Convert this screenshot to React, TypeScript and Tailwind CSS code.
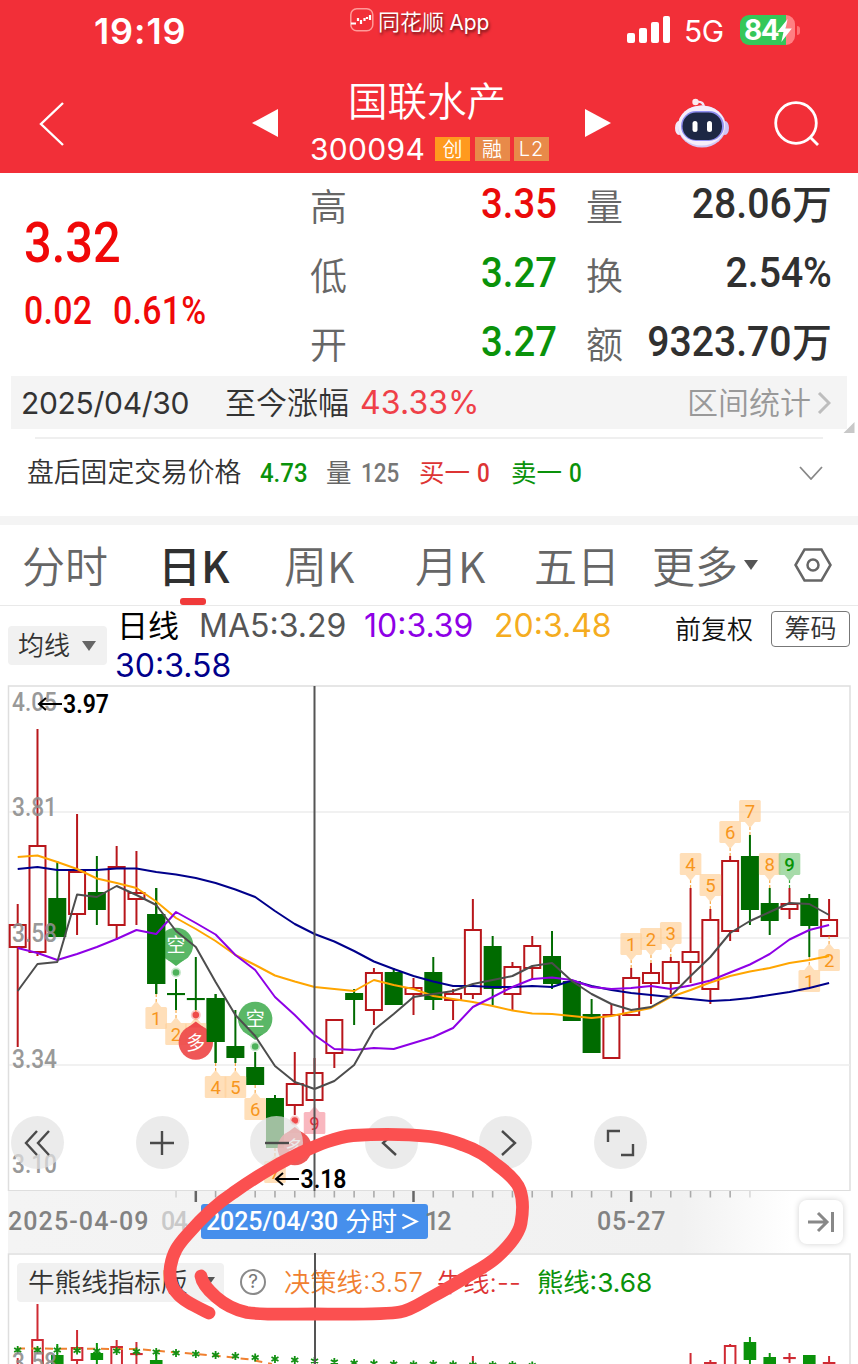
import type { ReactNode } from "react";

const STEP = 19.79;
const px = (i: number) => 17.7 + i * STEP;

const RED = "#b8161b";
const GREEN = "#006b00";

// [up, bodyTop, bodyBottom, high, low]
type Candle = [boolean, number, number, number, number];

const candles: Candle[] = [
  [true, 925, 947, 904, 1047],
  [true, 846, 952, 729, 956],
  [false, 898, 937, 861, 937],
  [true, 872, 914, 814, 935],
  [false, 892, 910, 856, 925],
  [true, 867, 925, 846, 940],
  [true, 893, 899, 851, 925],
  [false, 914, 984, 888, 994],
  [false, 993, 995, 979, 1010],
  [false, 998, 1000, 957, 1010],
  [false, 998, 1042, 994, 1063],
  [false, 1046, 1058, 1010, 1063],
  [false, 1067, 1085, 1052, 1085],
  [false, 1098, 1148, 1095, 1148],
  [true, 1084, 1105, 1052, 1115],
  [true, 1073, 1100, 1058, 1100],
  [true, 1020, 1053, 1020, 1068],
  [false, 993, 1000, 989, 1025],
  [true, 973, 1010, 968, 1025],
  [false, 972, 1005, 968, 1005],
  [true, 988, 994, 978, 1015],
  [false, 972, 1000, 957, 1010],
  [true, 994, 1000, 989, 1020],
  [true, 930, 994, 899, 999],
  [false, 946, 989, 936, 1005],
  [true, 967, 994, 962, 1010],
  [true, 946, 968, 936, 979],
  [false, 956, 984, 931, 989],
  [false, 981, 1021, 981, 1021],
  [false, 1014, 1053, 999, 1053],
  [true, 1015, 1058, 1004, 1058],
  [true, 978, 1015, 968, 1015],
  [true, 973, 983, 963, 1004],
  [true, 962, 983, 957, 994],
  [true, 952, 962, 888, 983],
  [true, 920, 989, 909, 1004],
  [true, 861, 931, 856, 941],
  [false, 856, 910, 835, 925],
  [false, 903, 921, 888, 935],
  [true, 904, 909, 888, 919],
  [false, 898, 926, 894, 957],
  [true, 920, 936, 899, 936],
];

const lines = [
  {
    color: "#00008b",
    ys: [869, 867, 870, 870, 870, 868.5, 868.5, 872, 874.5, 878, 883, 889.5, 897, 911, 924, 934, 941.5, 951, 961.5, 969, 976, 981.5, 986, 986, 987, 987, 986, 987, 980.5, 986, 990, 993, 995, 997, 999, 1001, 1000, 998, 995, 992, 988, 983],
  },
  {
    color: "#ffa500",
    ys: [857, 855.5, 862, 869, 878.5, 883, 888, 901.5, 918, 929, 941, 955, 965, 975.5, 981.5, 987, 989, 991, 980, 985, 989, 996, 999, 1002, 1006, 1010.5, 1013.5, 1014, 1016, 1018, 1016, 1012, 1008, 997, 990, 982.5, 976, 971.5, 968, 963, 960, 956],
  },
  {
    color: "#8e00e6",
    ys: [948, 953, 960, 954, 947, 939, 930, 934, 912, 923, 934.5, 955, 970, 997, 1015, 1035, 1049, 1050, 1048, 1049, 1043, 1037, 1028, 1007, 997, 987, 979, 977.5, 980, 987, 989, 988, 986, 989, 985.5, 980.5, 972.5, 964.5, 954, 939.5, 930, 925],
  },
  {
    color: "#4d4d4d",
    ys: [991, 964, 962, 894.5, 897, 886, 895, 905, 931, 947, 982, 1015, 1036, 1066, 1082, 1089, 1081, 1065, 1030, 1014, 997, 994, 991, 984, 980, 976, 966, 963, 981, 994, 1004, 1010, 1007, 996, 976, 957, 933, 921, 912, 903, 904, 915],
  },
];

// nine-turn counters: [candle index, label, tip y, above the candle]
const counters: [number, string, number, boolean][] = [
  [7, "1", 994, false],
  [8, "2", 1010, false],
  [9, "", 1010, false],
  [10, "4", 1063, false],
  [11, "5", 1063, false],
  [12, "6", 1085, false],
  [13, "7", 1148, false],
  [15, "9", 1099, false],
  [31, "1", 968, true],
  [32, "2", 963, true],
  [33, "3", 957, true],
  [34, "4", 888, true],
  [35, "5", 909, true],
  [36, "6", 856, true],
  [37, "7", 835, true],
  [38, "8", 888, true],
  [39, "9", 888, true],
  [40, "1", 957, false],
  [41, "2", 936, false],
];

const toPoints = (ys: number[]) => ys.map((y, i) => `${px(i)},${y}`).join(" ");

const CandleShape = ({ index, data }: { index: number; data: Candle }) => {
  const [up, top, bottom, high, low] = data;
  const x = px(index);
  const color = up ? RED : GREEN;
  return (
    <g stroke={color} strokeWidth="2">
      {high < top && <line x1={x} x2={x} y1={high} y2={top} />}
      {low > bottom && <line x1={x} x2={x} y1={bottom} y2={low} />}
      <rect
        x={x - 8}
        y={up ? top : top + 1}
        width="16"
        height={Math.max(up ? bottom - top : bottom - top - 2, 0.1)}
        fill={up ? "white" : GREEN}
      />
    </g>
  );
};

const Counter = ({ item }: { item: [number, string, number, boolean] }) => {
  const [index, label, tip, above] = item;
  const x = px(index);
  const top = above ? tip - 35 : tip + 13;
  const green = index === 39;
  const pink = index === 15;
  const bg = green ? "#82cd86" : pink ? "#f79aa4" : "#ffd29c";
  const fg = green ? "#089408" : pink ? "#d9303c" : "#f7961d";
  const edge = above ? top + 22 : top;
  const dir = above ? 1 : -1;
  return (
    <g>
      <line x1={x} x2={x} y1={tip} y2={edge + dir * 5} stroke={fg} strokeWidth="1.2" strokeDasharray="3 2" opacity="0.8" />
      <g fill={bg} opacity="0.7">
        <rect x={x - 10.8} y={top} width="21.6" height="22" rx="1.5" />
        <path d={`M${x - 5} ${edge}L${x} ${edge + dir * 6}L${x + 5} ${edge}Z`} />
      </g>
      <text x={x} y={top + 17.5} textAnchor="middle" fontSize="18.5" fontWeight={green ? 500 : 400} fill={fg}>
        {label}
      </text>
    </g>
  );
};

interface SignalProps {
  index: number;
  y: number;
  dotY: number;
  label: string;
  color: string;
}

const Signal = ({ index, y, dotY, label, color }: SignalProps) => {
  const x = px(index);
  const dir = dotY > y ? 1 : -1;
  return (
    <g>
      <circle cx={x} cy={dotY} r="5" fill={color} opacity="0.3" />
      <circle cx={x} cy={dotY} r="3.3" fill={color} />
      <circle cx={x} cy={y} r="17.2" fill={color} opacity="0.93" />
      <path d={`M${x - 8} ${y + dir * 15}L${x} ${y + dir * 21}L${x + 8} ${y + dir * 15}Z`} fill={color} />
      <text
        x={x}
        y={y + 7}
        textAnchor="middle"
        fontSize="19"
        fill="white"
        className="font-['Noto_Sans_CJK_SC',sans-serif]"
      >
        {label}
      </text>
    </g>
  );
};

const PriceChart = () => (
  <svg viewBox="0 685 858 506" className="block h-[506px] w-[858px] font-['Roboto','Noto_Sans_CJK_SC',sans-serif]">
    <path d="M8.5 1191V686H850V1191" fill="none" stroke="#dedede" strokeWidth="1.5" />
    {[812, 938, 1065].map((y) => (
      <line key={y} x1="9" x2="850" y1={y} y2={y} stroke="#ececec" strokeWidth="1.5" />
    ))}
    <line x1="8" x2="850" y1="1190.5" y2="1190.5" stroke="#dedede" />
    {candles.map((c, i) => (
      <CandleShape key={i} index={i} data={c} />
    ))}
    {counters.map((c) => (
      <Counter key={c[0]} item={c} />
    ))}
    <Signal index={8} y={945} dotY={972.5} label="空" color="#4db25a" />
    <Signal index={12} y={1019} dotY={1046.5} label="空" color="#4db25a" />
    <Signal index={9} y={1042.5} dotY={1015} label="多" color="#ee4a4a" />
    <Signal index={14} y={1148} dotY={1120.5} label="多" color="#ee4a4a" />
    {/* these two bodies sit in front of their neighbours' markers */}
    <CandleShape index={7} data={candles[7]} />
    <CandleShape index={10} data={candles[10]} />
    {lines.map((l) => (
      <polyline key={l.color} points={toPoints(l.ys)} fill="none" stroke={l.color} strokeWidth="2" strokeLinejoin="round" />
    ))}
    <g fontSize="25" fontWeight="500" fill="#8e8e8e" opacity="0.9">
      <text x="12" y="711" textLength="45" lengthAdjust="spacingAndGlyphs">4.05</text>
      <text x="12" y="815.5" textLength="45" lengthAdjust="spacingAndGlyphs">3.81</text>
      <text x="12" y="942" textLength="45" lengthAdjust="spacingAndGlyphs">3.58</text>
      <text x="12" y="1068" textLength="45" lengthAdjust="spacingAndGlyphs">3.34</text>
      <text x="12" y="1173" textLength="45" lengthAdjust="spacingAndGlyphs">3.10</text>
    </g>
    <line x1="314.5" x2="314.5" y1="686" y2="1191" stroke="#555" strokeWidth="2" />
    <g stroke="black" strokeWidth="2" fill="none">
      <path d="M62 704H39M46 698L39 704L46 710" />
      <path d="M299 1179H276M283 1173L276 1179L283 1185" />
    </g>
    <g fontSize="25" fontWeight="600" fill="black">
      <text x="63" y="713" textLength="46" lengthAdjust="spacingAndGlyphs">3.97</text>
      <text x="300.5" y="1188" textLength="46" lengthAdjust="spacingAndGlyphs">3.18</text>
    </g>
  </svg>
);

const RoundButton = ({ children }: { children: ReactNode }) => (
  <button className="flex h-[53px] w-[53px] items-center justify-center rounded-full bg-[#e3e3e3]/70 first:mr-[10px]">
    <svg viewBox="0 0 52 52" className="h-[52px] w-[52px]" fill="none" stroke="#4a4a4a" strokeWidth="2.4">
      {children}
    </svg>
  </button>
);

const ChartControls = () => (
  <div className="absolute top-[431px] left-[11px] flex gap-[61.6px]">
    <RoundButton>
      <path d="M25 14L14 26L25 38M37 14L26 26L37 38" />
    </RoundButton>
    <RoundButton>
      <path d="M14 26H38M26 14V38" />
    </RoundButton>
    <RoundButton>
      <path d="M14 26H38" />
    </RoundButton>
    <RoundButton>
      <path d="M31 14L18 26L31 38" />
    </RoundButton>
    <RoundButton>
      <path d="M22 14L35 26L22 38" />
    </RoundButton>
    <RoundButton>
      <path d="M14 25V14H26M39 27V38H27" />
    </RoundButton>
  </div>
);

const StatusBar = () => (
  <div className="flex h-[60px] items-start text-white">
    <span className="mt-[11px] ml-[94px] w-[256px] font-['Inter'] text-[36px]/[40px] font-semibold tracking-[0.9px]">19:19</span>
    <svg viewBox="0 0 24 24" className="mt-[8px] h-[24px] w-[24px] shrink-0" fill="none">
      <rect x="0.8" y="0.8" width="22" height="22" rx="6" stroke="#ff9a98" strokeWidth="1.5" />
      <path d="M1 15.500h5M8 10v3M11 12v4M14.500 10v3M17 9v2M20 7v5" stroke="white" strokeWidth="2.2" />
    </svg>
    <span className="mt-[7px] ml-1 w-[249px] font-['Inter','Noto_Sans_CJK_SC',sans-serif] text-[22px]/[30px] font-[350] whitespace-nowrap [text-shadow:1px_2px_3px_rgba(0,0,0,0.6)]">
      同花顺 <span className="-ml-[1px] text-[21px] font-normal">App</span>
    </span>
    <div className="mt-[16px] flex h-[27px] w-[43px] shrink-0 items-end justify-between">
      <i className="h-[10px] w-[8px] rounded-[2px] bg-white" />
      <i className="h-[15px] w-[8px] rounded-[2px] bg-white" />
      <i className="h-[21px] w-[8px] rounded-[2px] bg-white" />
      <i className="h-[27px] w-[7px] rounded-[2px] bg-white" />
    </div>
    <span className="mt-[12px] ml-[14px] w-[56px] font-['Inter'] text-[30px]/[38px] tracking-[-0.5px]">5G</span>
    <div className="mt-[15px] flex h-[30px] w-[55px] shrink-0 items-center rounded-[9px] bg-[linear-gradient(90deg,#34c759_83%,#ff7f82_83%)] pl-[4px]">
      <span className="w-[33px] font-['Inter'] text-[28px]/[30px] font-bold tracking-[-1.5px]">84</span>
      <svg viewBox="0 0 14 22" className="h-[23px] w-[15px] shrink-0" fill="white">
        <path d="M10 0L0 12.500H6L4 22L14 9H8Z" />
      </svg>
    </div>
    <i className="mt-[26px] ml-[2px] h-[9px] w-[3px] rounded-r-full bg-[#ff6f72]" />
  </div>
);

const Robot = () => (
  <svg viewBox="0 0 54 50" className="h-[50px] w-[54px] shrink-0">
    <path d="M21 4C26 3 29 5 29 10" fill="none" stroke="#f3e6f7" strokeWidth="2.2" />
    <circle cx="20.500" cy="4" r="3.200" fill="#fbe9ef" />
    <ellipse cx="4" cy="30" rx="4" ry="7" fill="#f3e8f8" />
    <ellipse cx="50" cy="30" rx="4" ry="7" fill="#cfc4f5" />
    <ellipse cx="27" cy="28.500" rx="24" ry="21" fill="#d3c8f6" />
    <ellipse cx="26.500" cy="27.500" rx="23.500" ry="20" fill="#f5eefb" />
    <rect x="6" y="13" width="43" height="30" rx="15" fill="#8f8ff0" />
    <rect x="7.500" y="14.500" width="39.500" height="27.500" rx="13.500" fill="#1d2744" />
    <rect x="17.500" y="23" width="5" height="11" rx="2.500" fill="white" />
    <rect x="32" y="23" width="5" height="11" rx="2.500" fill="white" />
  </svg>
);

const tagClass = "flex h-[24px] w-[35px] items-center justify-center text-[20px]/[24px] font-[350]";

const Header = () => (
  <header className="h-[173px] bg-[#f22f38] text-white">
    <StatusBar />
    <div className="flex h-[113px] items-start">
      <svg viewBox="0 0 26 46" className="mt-[41px] ml-[39px] h-[46px] w-[26px]" fill="none" stroke="white" strokeWidth="2.4">
        <path d="M24 2L2 23L24 44" />
      </svg>
      <svg viewBox="0 0 26 28" className="mt-[49px] ml-[187px] h-[28px] w-[26px]" fill="white">
        <path d="M0 14L26 0V28Z" />
      </svg>
      <div className="ml-[32px] flex w-[241px] flex-col">
        <h1 className="mt-[11px] mb-[2px] pl-[38px] text-[39.5px]/[56px] font-[350] whitespace-nowrap">国联水产</h1>
        <div className="flex h-[40px] items-center gap-[4.5px]">
          <span className="w-[120.500px] font-['Inter'] text-[30px]/[36px] tracking-[0.3px]">300094</span>
          <span className={`${tagClass} bg-[#ff9a1e]`}>创</span>
          <span className={`${tagClass} bg-[#e88a49]`}>融</span>
          <span className={`${tagClass} bg-[#e88a49] font-['Inter'] tracking-[1px]`}>L2</span>
        </div>
      </div>
      <svg viewBox="0 0 26 28" className="mt-[49px] ml-[34px] h-[28px] w-[26px]" fill="white">
        <path d="M26 14L0 0V28Z" />
      </svg>
      <div className="mt-[38px] ml-[64px] flex">
        <Robot />
      </div>
      <svg viewBox="0 0 46 46" className="mt-[41px] ml-[45px] h-[46px] w-[46px]" fill="none" stroke="white" strokeWidth="2.8">
        <circle cx="22" cy="22" r="20.3" />
        <path d="M36 36L44 44" />
      </svg>
    </div>
  </header>
);

const stats = [
  { label: "高", value: "3.35", color: "text-[#eb0a0a]", label2: "量", value2: "28.06", unit: "万" },
  { label: "低", value: "3.27", color: "text-[#0a920a]", label2: "换", value2: "2.54%", unit: "" },
  { label: "开", value: "3.27", color: "text-[#0a920a]", label2: "额", value2: "9323.70", unit: "万" },
];

const labelClass = "w-[37px] text-[37px]/[60px] font-[350] text-[#666]";

const Quote = () => (
  <section className="flex h-[203px] font-medium">
    <div className="w-[310px] pl-[24px] font-['Roboto'] text-[#f00808]">
      <div className="mt-[37px] w-fit origin-left scale-x-[0.87] text-[56px]/[66px]">3.32</div>
      <div className="mt-[13px] flex text-[38px]/[44px] tracking-[0.3px]">
        <span className="w-[89px] origin-left scale-x-[0.89]">0.02</span>
        <span className="origin-left scale-x-[0.89]">0.61%</span>
      </div>
    </div>
    <div className="-mt-[3px] flex flex-1 flex-col">
      {stats.map((row) => (
        <div key={row.label} className="flex h-[69px] shrink-0 items-center">
          <span className={labelClass}>{row.label}</span>
          <span className={`w-[210px] origin-right scale-x-[0.89] pb-[4px] text-right font-['Roboto'] text-[43px]/[60px] ${row.color}`}>{row.value}</span>
          <span className={`ml-[29px] ${labelClass}`}>{row.label2}</span>
          <span className="flex w-[209px] justify-end pb-[4px] text-[43px]/[60px] text-[#303030]">
            <span className="origin-right scale-x-[0.91] font-['Roboto']">{row.value2}</span>
            <span className="text-[40px]/[58px]">{row.unit}</span>
          </span>
        </div>
      ))}
    </div>
  </section>
);

const RangeBar = () => (
  <div className="flex h-[62px] items-start">
    <div className="ml-[11px] flex h-[53px] w-[836px] items-center bg-[#f4f4f4] pl-[10px] font-['Inter','Noto_Sans_CJK_SC',sans-serif] text-[30px]/[40px] whitespace-nowrap text-[#333]">
      <span className="w-[204px] tracking-[-0.3px]">2025/04/30</span>
      <span className="w-[135px] text-[31px] font-[350]">至今涨幅</span>
      <span className="w-[327px] text-[32px] tracking-[0.1px] text-[#ef4048]">43.33%</span>
      <span className="w-[130px] text-[31px] font-[350] text-[#999]">区间统计</span>
      <svg viewBox="0 0 14 22" className="h-[22px] w-[14px]" fill="none" stroke="#bdbdbd" strokeWidth="3">
        <path d="M2 1L12 11L2 21" />
      </svg>
    </div>
    <svg viewBox="0 0 12 12" className="mt-[46px] -ml-[4px] h-[11px] w-[12px]" fill="#c8c8c8">
      <path d="M12 0V12H0Z" />
    </svg>
  </div>
);

const AfterHours = () => (
  <div className="h-[79px]">
    <div className="mx-[35px] -mt-[1px] h-[2px] bg-[#efefef]" />
    <div className="flex h-[68px] items-center pl-[27px] font-['Roboto','Noto_Sans_CJK_SC',sans-serif] text-[25.5px]/[36px] font-medium whitespace-nowrap">
      <span className="w-[233px] text-[26.8px] font-[350] text-[#333]">盘后固定交易价格</span>
      <span className="w-[66px] origin-left scale-x-[0.94]  text-[#0a920a]">4.73</span>
      <span className="w-[35px] font-normal text-[#666]">量</span>
      <span className="w-[58px] origin-left scale-x-[0.88] text-[#777]">125</span>
      <span className="w-[58px] font-normal text-[#dd3434]">买一</span>
      <span className="w-[34px] origin-left scale-x-[0.88] text-[#dd3434]">0</span>
      <span className="w-[58px] font-normal text-[#0a920a]">卖一</span>
      <span className="w-[230px] origin-left scale-x-[0.88] text-[#0a920a]">0</span>
      <svg viewBox="0 0 24 14" className="h-[14px] w-[24px]" fill="none" stroke="#888" strokeWidth="1.8">
        <path d="M1 1L12 13L23 1" />
      </svg>
    </div>
  </div>
);

const tabs = [
  { name: "分时", width: "w-[136px]" },
  { name: "日K", width: "w-[126px]" },
  { name: "周K", width: "w-[131px]" },
  { name: "月K", width: "w-[119px]" },
  { name: "五日", width: "w-[118px]" },
  { name: "更多", width: "w-[92px]" },
];

const Tabs = () => (
  <nav className="flex h-[90px] items-start border-t-[9px] border-b-[1.5px] border-t-[#f4f4f4] border-b-[#e9e9e9] pl-[22px] text-[43px]/[60px] whitespace-nowrap text-[#666]">
    {tabs.map((t) => (
      <div key={t.name} className={`${t.width} shrink-0 pt-[9px] ${t.name === "日K" ? "font-medium text-[#303030]" : "font-[350]"}`}>
        {t.name}
        {t.name === "日K" && <div className="mt-[4px] ml-[22px] h-[7px] w-[26px] rounded-[3px] bg-[#f03a3a]" />}
      </div>
    ))}
    <svg viewBox="0 0 14 10" className="mt-[35px] h-[10px] w-[14px]" fill="#555">
      <path d="M0 0H14L7 10Z" />
    </svg>
    <svg viewBox="0 0 38 34" className="mt-[23px] ml-[36px] h-[34px] w-[38px]" fill="none" stroke="#666" strokeWidth="2.5">
      <path d="M10.500 1.500H27.500L36.500 17L27.500 32.500H10.500L1.500 17Z" />
      <circle cx="19" cy="17" r="5.5" />
    </svg>
  </nav>
);

const Averages = () => (
  <div className="flex h-[80px] items-start font-['Inter','Noto_Sans_CJK_SC',sans-serif] font-[350] whitespace-nowrap">
    <button className="mt-[20px] ml-[8px] flex h-[39px] w-[99px] items-center justify-between rounded bg-[#f1f1f1] pr-[11px] pl-[10px] text-[26px]/[36px] text-[#333]">
      均线
      <svg viewBox="0 0 14 10" className="h-[10px] w-[14px]" fill="#666">
        <path d="M0 0H14L7 10Z" />
      </svg>
    </button>
    <div className="ml-[8px] w-[560px] text-[32px]/[40px] font-normal">
      <div className="flex">
        <span className="w-[84px] pl-[2px] text-[31px]/[40px] text-black">日线</span>
        <span className="w-[165px] text-[#555]">MA5:3.29</span>
        <span className="w-[130px] text-[#8e00e6]">10:3.39</span>
        <span className="text-[#f5ac20]">20:3.48</span>
      </div>
      <div className="text-[#00008b]">30:3.58</div>
    </div>
    <span className="mt-[6px] w-[96px] text-[26px]/[36px] text-[#111]">前复权</span>
    <button className="mt-[5px] flex h-[36px] w-[79px] items-center justify-center rounded border-[1.5px] border-[#777] text-[26px]/[34px] text-[#333]">筹码</button>
  </div>
);

const TimeAxis = () => (
  <div className="relative ml-[8px] flex h-[62px] w-[842px] items-start bg-[linear-gradient(90deg,#f4f4f4_0%,#f1f1f1_80%,#fff_93%)] font-['Roboto','Noto_Sans_CJK_SC',sans-serif] text-[25px]/[34px] font-medium whitespace-nowrap text-[#828282]">
    <svg viewBox="8 1191 842 12" className="absolute top-0 left-0 h-[12px] w-[842px]">
      {candles.map((_, i) => {
        if (i < 8 || i > 37) return null;
        const major = i % 11 === 9;
        return <line key={i} x1={px(i)} x2={px(i)} y1="1191" y2={major ? 1202 : 1197.5} stroke={major ? "#666" : "#aaa"} strokeWidth={major ? 2.5 : 1.6} opacity={i === 8 || i === 37 ? 0.4 : 1} />;
      })}
    </svg>
    <span className="mt-[14px] w-[153px] tracking-[1.1px]">2025-04-09</span>
    <span className="mt-[14px] w-[40px] tracking-[-1.5px] text-[#c9c9c9]">04</span>
    <span className="mt-[13px] flex h-[35px] w-[227px] items-center rounded-[3px] bg-[#468fec] pl-[5px] text-white">
      <span className="w-[139px] tracking-[-0.1px]">2025/04/30</span>
      <span className="text-[26px] font-normal">分时</span>
      <svg viewBox="0 0 18 18" className="ml-[4px] h-[17px] w-[18px]" fill="none" stroke="white" strokeWidth="2.4">
        <path d="M1 1.500L16 9L1 16.500" />
      </svg>
    </span>
    <span className="mt-[14px] -ml-[3px] w-[171px] tracking-[-2px]">12</span>
    <span className="mt-[14px] ml-[1px] w-[202px] tracking-[0.8px]">05-27</span>
    <button className="mt-[9px] flex h-[44px] w-[44px] shrink-0 items-center justify-center rounded-[8px] bg-white shadow-[0_0_6px_rgba(0,0,0,0.18)]">
      <svg viewBox="0 0 28 22" className="h-[22px] w-[28px]" fill="none" stroke="#888" strokeWidth="3">
        <path d="M1 11H19M11 2L20 11L11 20M25.500 1V21" />
      </svg>
    </button>
  </div>
);

const subCandles: [number, ...Candle][] = [
  [0, true, 1364, 1370, 1358, 1370],
  [1, true, 1339, 1375, 1304, 1375],
  [2, false, 1355, 1370, 1344, 1370],
  [3, true, 1347, 1361, 1330, 1370],
  [4, false, 1353, 1360, 1343, 1370],
  [5, true, 1346, 1370, 1340, 1370],
  [6, true, 1353, 1354, 1342, 1370],
  [7, false, 1360, 1370, 1351, 1370],
  [23, true, 1368, 1370, 1356, 1370],
  [34, true, 1368, 1370, 1353, 1370],
  [35, true, 1362, 1370, 1360, 1370],
  [36, true, 1345, 1370, 1344, 1370],
  [37, false, 1342, 1360, 1337, 1370],
  [38, false, 1357, 1370, 1353, 1370],
  [39, true, 1357, 1358, 1353, 1363],
  [40, false, 1355, 1370, 1355, 1370],
  [41, true, 1362, 1370, 1356, 1370],
];

const stars = [1350, 1350, 1350, 1350.5, 1351, 1351, 1351.5, 1352, 1353, 1354, 1355, 1356, 1357.5, 1359, 1360, 1361, 1362, 1363, 1363.5, 1364, 1364.5, 1364, 1364.5, 1365, 1365, 1365, 1365.5];

const IndicatorPanel = () => (
  <section className="relative h-[111px] overflow-hidden">
    <svg viewBox="0 1253 858 111" className="absolute inset-0 h-[111px] w-[858px]">
      <path d="M8.500 1364V1254H850V1364" fill="none" stroke="#dedede" strokeWidth="1.5" />
      {subCandles.map(([i, up, top, bottom, high, low]) => (
        <g key={i} stroke={up ? "#cf2a33" : "#0a920a"} strokeWidth="2">
          <line x1={px(i)} x2={px(i)} y1={high} y2={low} />
          <rect x={px(i) - 5.3} y={top + 1} width="10.6" height={Math.max(bottom - top - 2, 0.1)} fill={up ? "white" : "#0a920a"} />
        </g>
      ))}
      <polyline points="17,1348.500 138,1349 160,1351 213,1355.500 233,1357.500 250,1359.500 272,1364" fill="none" stroke="#f08030" strokeWidth="2" strokeDasharray="8 6" />
      {stars.map((y, i) => (
        <path key={i} d={`M${px(i)} ${y - 4}v8M${px(i) - 3.5} ${y - 2}l7 4M${px(i) + 3.5} ${y - 2}l-7 4`} stroke="#139013" strokeWidth="1.8" />
      ))}
      <text x="12" y="1371" fontSize="25" fontWeight="500" fill="#8e8e8e" opacity="0.9" textLength="45" lengthAdjust="spacingAndGlyphs" className="font-['Roboto']">
        3.58
      </text>
    </svg>
    <div className="flex items-center pt-[9px] pl-[17px] font-['Inter','Noto_Sans_CJK_SC',sans-serif] text-[26.3px]/[38px] whitespace-nowrap">
      <button className="relative flex h-[39px] w-[207px] items-center justify-between rounded bg-[#f1f1f1] pr-[9px] pl-[11px] text-[26.6px] font-[350] text-[#333]">
        牛熊线指标版
        <svg viewBox="0 0 14 10" className="h-[10px] w-[14px]" fill="#555">
          <path d="M0 0H14L7 10Z" />
        </svg>
      </button>
      <span className="relative ml-[16px] flex h-[26px] w-[26px] items-center justify-center rounded-full border-2 border-[#8a8a8a] text-[19px]/[22px] text-[#777]">?</span>
      <span className="relative mt-[2px] ml-[18px] w-[153px] font-[350] text-[#f08030]">决策线:3.57</span>
      <span className="relative mt-[2px] w-[100px] font-[350] text-[#dd3434]">牛线:--</span>
      <span className="relative mt-[2px] text-[#0a920a]">熊线:3.68</span>
    </div>
    <i className="absolute top-0 left-[313.5px] h-full w-[2px] bg-[#555]" />
  </section>
);

const HandMark = () => (
  <svg viewBox="150 1120 390 210" className="pointer-events-none absolute top-[1120px] left-[150px] h-[210px] w-[390px]">
    <path
      d="M209 1313C197 1307 183 1301 177 1293C171 1287 169 1277 170.500 1266C173 1252 178 1245 187 1235C200 1220 216 1204 233 1193C254 1178 277 1164 300 1153C318 1145 336 1137 353 1135.500C378 1134 406 1134 430 1136.500C443 1138 453 1141 463 1145C475 1149 488 1157 497 1165C508 1173 517 1181 520 1190C523 1199 523 1212 521 1223C519 1234 509 1246 497 1257C487 1266 476 1271 463 1279C452 1286 441 1292 430 1298C421 1303 411 1310 400 1312C384 1315 336 1314 313 1314C290 1314 262 1315 247 1312.500C235 1310 224 1304 216 1297C208 1290 202 1283 201 1276"
      fill="none"
      stroke="#fb5050"
      strokeWidth="12.8"
      strokeLinecap="round"
      strokeLinejoin="round"
    />
  </svg>
);

const App = () => {
  return (
    <div className="relative h-[1364px] w-[858px] overflow-hidden bg-white font-['Noto_Sans_CJK_SC',sans-serif]">
      <Header />
      <Quote />
      <RangeBar />
      <AfterHours />
      <Tabs />
      <Averages />
      <div className="relative -mt-[1px]">
        <PriceChart />
        <ChartControls />
      </div>
      <TimeAxis />
      <IndicatorPanel />
      <HandMark />
    </div>
  );
};

export default App;
